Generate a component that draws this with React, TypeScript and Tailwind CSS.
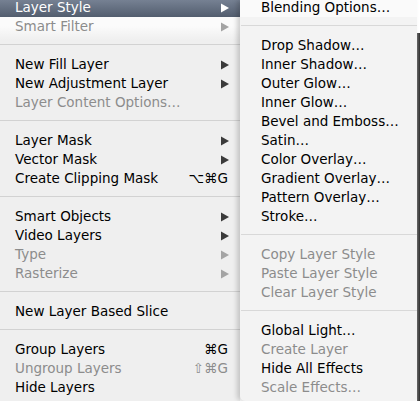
import React from "react";

type Item =
  | { label: string; disabled?: boolean; arrow?: boolean; shortcut?: string; highlight?: boolean }
  | "sep";

const left: Item[] = [
  { label: "Layer Style", arrow: true, highlight: true },
  { label: "Smart Filter", arrow: true, disabled: true },
  "sep",
  { label: "New Fill Layer", arrow: true },
  { label: "New Adjustment Layer", arrow: true },
  { label: "Layer Content Options…", disabled: true },
  "sep",
  { label: "Layer Mask", arrow: true },
  { label: "Vector Mask", arrow: true },
  { label: "Create Clipping Mask", shortcut: "⌥⌘G" },
  "sep",
  { label: "Smart Objects", arrow: true },
  { label: "Video Layers", arrow: true },
  { label: "Type", arrow: true, disabled: true },
  { label: "Rasterize", arrow: true, disabled: true },
  "sep",
  { label: "New Layer Based Slice" },
  "sep",
  { label: "Group Layers", shortcut: "⌘G" },
  { label: "Ungroup Layers", shortcut: "⇧⌘G", disabled: true },
  { label: "Hide Layers" },
];

const right: Item[] = [
  { label: "Blending Options…" },
  "sep",
  { label: "Drop Shadow…" },
  { label: "Inner Shadow…" },
  { label: "Outer Glow…" },
  { label: "Inner Glow…" },
  { label: "Bevel and Emboss…" },
  { label: "Satin…" },
  { label: "Color Overlay…" },
  { label: "Gradient Overlay…" },
  { label: "Pattern Overlay…" },
  { label: "Stroke…" },
  "sep",
  { label: "Copy Layer Style", disabled: true },
  { label: "Paste Layer Style", disabled: true },
  { label: "Clear Layer Style", disabled: true },
  "sep",
  { label: "Global Light…" },
  { label: "Create Layer", disabled: true },
  { label: "Hide All Effects" },
  { label: "Scale Effects…", disabled: true },
];

function Arrow({ color }: { color: string }) {
  return (
    <svg width="8" height="10" viewBox="0 0 8 10" className="shrink-0">
      <polygon points="0,0.5 8,5 0,9.5" fill={color} />
    </svg>
  );
}

function Row({ item, sub }: { item: Item; sub?: boolean }) {
  if (item === "sep") {
    return (
      <div className="h-[19px] flex flex-col">
        <div className="h-[8px]" />
        <div className={sub ? "h-px bg-[#d8d8d8] ml-[1px]" : "h-px bg-[#d2d2d2]"} />
      </div>
    );
  }
  const color = item.highlight ? "text-white" : item.disabled ? "text-[#8c8c8c]" : "text-black";
  return (
    <div
      className={
        "h-[19px] flex items-center " +
        (sub ? "pl-[21px] pr-[10px] " : "pl-[15px] pr-[10px] ") +
        (item.highlight ? "bg-[linear-gradient(#7a8597,#525d6e)] " : "") +
        color
      }
    >
      <span className="flex-1 whitespace-nowrap">{item.label}</span>
      {item.shortcut && <span className="whitespace-nowrap mr-[2px]">{item.shortcut}</span>}
      {item.arrow && (
        <span className="mr-[1px] flex items-center">
          <Arrow color={item.highlight ? "#ffffff" : item.disabled ? "#a4a4a4" : "#3a3a3a"} />
        </span>
      )}
    </div>
  );
}

export default function App() {
  return (
    <div
      className="w-[420px] h-[401px] overflow-hidden flex bg-white text-[13.5px] leading-[19px]"
      style={{ fontFamily: '"DejaVu Sans", "Liberation Sans", sans-serif' }}
    >
      <div className="w-[240px] shrink-0 bg-[linear-gradient(#fbfbfb_0px,#fbfbfb_26px,#efefef_40px)]">
        <div className="-mt-[2px]">
          {left.map((it, i) => (
            <Row key={i} item={it} />
          ))}
        </div>
      </div>
      <div className="w-[177px] shrink-0 bg-[#f3f3f3] rounded-bl-[5px] rounded-br-[3px] shadow-[-3px_0_5px_rgba(0,0,0,0.18)] relative z-10">
        <div className="-mt-[2px]">
          <div className="bg-[#fafafa]">
            <Row item={right[0]} sub />
          </div>
          {right.slice(1).map((it, i) => (
            <Row key={i} item={it} sub />
          ))}
        </div>
      </div>
      <div className="w-[3px] shrink-0 flex flex-col">
        <div className="h-[33px] bg-white" />
        <div className="flex-1 bg-[linear-gradient(90deg,#6a6a6a,#2e2e2e)]" />
      </div>
    </div>
  );
}
